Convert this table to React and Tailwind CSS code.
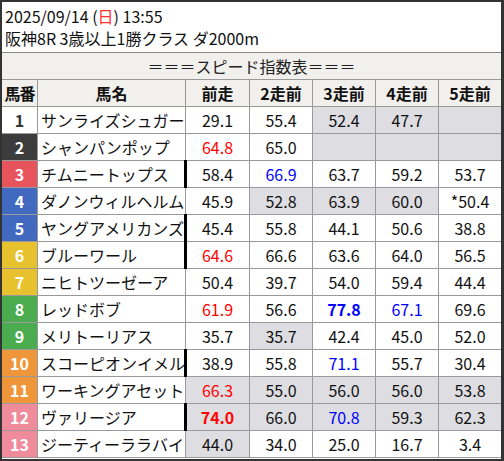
import React from "react";

const NUM = {
  1: "bg-white text-[#333]",
  2: "bg-[#3c3c3c] text-white",
  3: "bg-[#e8545c] text-white",
  4: "bg-[#4169c0] text-white",
  5: "bg-[#4169c0] text-white",
  6: "bg-[#e8c22e] text-white",
  7: "bg-[#e8c22e] text-white",
  8: "bg-[#4aab4f] text-white",
  9: "bg-[#4aab4f] text-white",
  10: "bg-[#f0963a] text-white",
  11: "bg-[#f0963a] text-white",
  12: "bg-[#f08b9b] text-white",
  13: "bg-[#f08b9b] text-white",
};

// value, flags: g gray, r red, b blue, B bold
const rows = [
  { n: 1, name: "サンライズシュガー", bar: false, v: [["29.1"], ["55.4"], ["52.4", "g"], ["47.7", "g"], ["", "g"]] },
  { n: 2, name: "シャンパンポップ", bar: false, v: [["64.8", "r"], ["65.0"], ["", "g"], ["", "g"], ["", "g"]] },
  { n: 3, name: "チムニートップス", bar: true, v: [["58.4"], ["66.9", "b"], ["63.7"], ["59.2"], ["53.7"]] },
  { n: 4, name: "ダノンウィルヘルム", bar: false, v: [["45.9"], ["52.8", "g"], ["63.9", "g"], ["60.0", "g"], ["*50.4"]] },
  { n: 5, name: "ヤングアメリカンズ", bar: true, v: [["45.4"], ["55.8"], ["44.1"], ["50.6"], ["38.8"]] },
  { n: 6, name: "ブルーワール", bar: true, v: [["64.6", "r"], ["66.6"], ["63.6"], ["64.0"], ["56.5"]] },
  { n: 7, name: "ニヒトツーゼーア", bar: false, v: [["50.4"], ["39.7"], ["54.0"], ["59.4"], ["44.4"]] },
  { n: 8, name: "レッドボブ", bar: false, v: [["61.9", "r"], ["56.6"], ["77.8", "bB"], ["67.1", "b"], ["69.6"]] },
  { n: 9, name: "メリトーリアス", bar: false, v: [["35.7"], ["35.7", "g"], ["42.4"], ["45.0"], ["52.0"]] },
  { n: 10, name: "スコーピオンイメル", bar: true, v: [["38.9"], ["55.8"], ["71.1", "b"], ["55.7"], ["30.4"]] },
  { n: 11, name: "ワーキングアセット", bar: false, v: [["66.3", "rg"], ["55.0", "g"], ["56.0", "g"], ["56.0", "g"], ["53.8", "g"]] },
  { n: 12, name: "ヴァリージア", bar: true, v: [["74.0", "rBg"], ["66.0", "g"], ["70.8", "bg"], ["59.3", "g"], ["62.3", "g"]] },
  { n: 13, name: "ジーティーララバイ", bar: false, v: [["44.0", "g"], ["34.0"], ["25.0"], ["16.7"], ["3.4"]] },
];

function ValCell({ val, flags = "", last, bar }) {
  const gray = flags.includes("g");
  const red = flags.includes("r");
  const blue = flags.includes("b");
  const bold = flags.includes("B");
  return (
    <div
      className={`relative flex items-center justify-center h-[27px] border-b border-[#999] ${last ? "" : "border-r"} ${
        gray ? "bg-[#dddde2]" : "bg-white"
      } ${red ? "text-[#ff0000]" : blue ? "text-[#0000ff]" : "text-[#111]"} ${bold ? "font-bold" : ""}`}
    >
      {bar && <span className="absolute left-[-2px] top-[-1px] bottom-[-1px] w-[3px] bg-black" />}
      {val}
    </div>
  );
}

export default function App() {
  const font = { fontFamily: '"Noto Sans CJK JP", "Noto Sans", sans-serif' };
  return (
    <div
      className="w-[504px] h-[461px] overflow-hidden bg-white border-l-2 border-t-2 border-b-2 border-r-[3px] border-[#333] text-[16px] text-[#111]"
      style={font}
    >
      <div className="h-[51px] border-b border-[#888] pl-[3px] pt-[3px] leading-[22px]">
        <div>
          2025/09/14 (<span className="text-[#ff3030]">日</span>) 13:55
        </div>
        <div>阪神8R 3歳以上1勝クラス ダ2000m</div>
      </div>
      <div className="grid grid-cols-[36px_148px_64px_63px_63px_63px_62px]">
        <div className="col-span-7 h-[27px] border-b border-[#999] bg-[#f1f0ec] flex items-center justify-center text-[#222]">
          ＝＝＝スピード指数表＝＝＝
        </div>
        {["馬番", "馬名", "前走", "2走前", "3走前", "4走前", "5走前"].map((h, i) => (
          <div
            key={h}
            className={`h-[27px] flex items-center justify-center font-bold bg-[#f1f0ec] border-b border-[#999] ${
              i < 6 ? "border-r" : ""
            } ${i === 0 ? "tracking-[-1px]" : ""}`}
          >
            {h}
          </div>
        ))}
        {rows.map((r) => (
          <React.Fragment key={r.n}>
            <div
              className={`h-[27px] flex items-center justify-center font-bold border-r border-b border-[#999] ${NUM[r.n]}`}
            >
              {r.n}
            </div>
            <div className="h-[27px] flex items-center pl-[3px] border-r border-b border-[#999] bg-white whitespace-nowrap">
              {r.name}
            </div>
            {r.v.map(([val, flags], i) => (
              <ValCell key={i} val={val} flags={flags} last={i === 4} bar={i === 0 && r.bar} />
            ))}
          </React.Fragment>
        ))}
      </div>
    </div>
  );
}
